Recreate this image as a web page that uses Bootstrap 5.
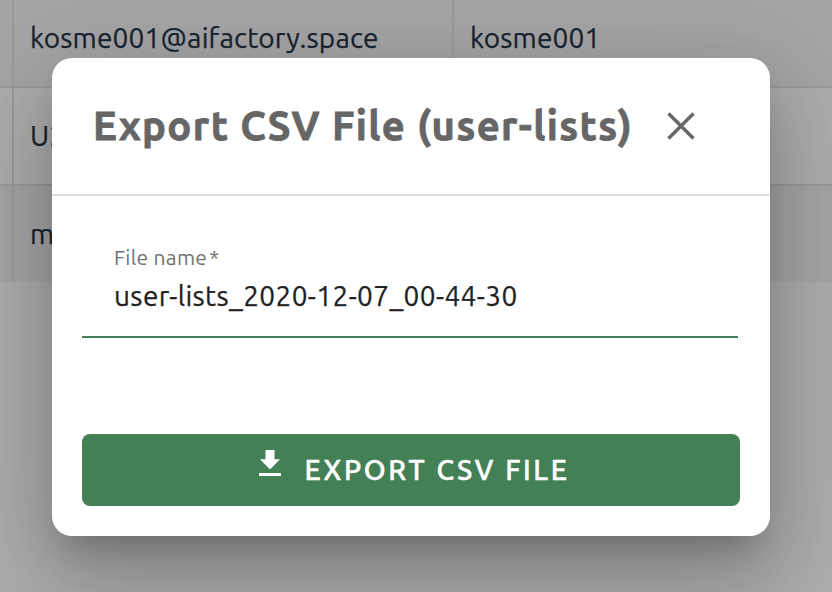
<!DOCTYPE html>
<html lang="en">
<head>
<meta charset="utf-8">
<meta name="viewport" content="width=device-width, initial-scale=1">
<title>Export CSV File</title>
<link href="https://cdn.jsdelivr.net/npm/bootstrap@5.3.0/dist/css/bootstrap.min.css" rel="stylesheet">
<style>
  body { font-family: Ubuntu, "Noto Sans", sans-serif; background: #fff; height: 592px; }
  .user-grid { display: grid; grid-template-columns: 14px 440px 1fr; color: #263548; font-size: 28px; line-height: 40px; letter-spacing: .17px; -webkit-text-stroke: .25px; }
  .user-grid > div { height: 98px; padding-left: 16px; border-right: 2px solid #e2e2e5; border-bottom: 2px solid #e4e4e6; display: flex; align-items: center; }
  .user-grid > div:nth-child(3n+1) { padding-left: 0; }
  .user-grid > div:nth-child(3n) { border-right: 0; }
  .user-grid > div:nth-child(-n+3) { height: 88px; align-items: flex-start; }
  .user-grid > div:nth-child(-n+3) span { margin-top: 18px; }
  .user-grid > .striped { background: #f4f4f8; }
  .user-grid > div:nth-child(n+7) { border-bottom: 0; height: 96px; }
  .scrim { background: rgba(0,0,0,.32); padding: 58px 62px 56px 52px; }
  .export-dialog { height: 478px; border: 0; border-radius: 20px; box-shadow: 0 22px 30px -14px rgba(0,0,0,.2), 0 48px 76px 6px rgba(0,0,0,.14), 0 18px 92px 16px rgba(0,0,0,.12); }
  .export-head { height: 138px; border-bottom: 2px solid #dcdcdc; padding: 0 74px 0 41px; color: #666; }
  .export-title { font-size: 40px; font-weight: 700; line-height: 1; letter-spacing: 1.4px; -webkit-text-stroke: .8px; }
  .export-body { padding: 30px; }
  .name-field { width: 656px; height: 112px; border-bottom: 2px solid #438055; padding: 18px 32px 0; }
  .name-field label { font-size: 21px; line-height: 26px; color: #717171; display: block; letter-spacing: .3px; }
  .name-field label span { margin-left: 2px; }
  .name-field input { font-size: 28px; line-height: 40px; height: 40px; color: #212121; letter-spacing: .38px; margin-top: 6px; -webkit-text-stroke: .25px; }
  .export-btn, .export-btn:hover { height: 72px; width: 658px; border: 0; border-radius: 8px; background: #438055; color: #fff; font-size: 28px; font-weight: 500; letter-spacing: 2.65px; line-height: 1; -webkit-text-stroke: .5px; }
  .export-btn svg { margin: 0 -1px 14px 7px; }
</style>
<script src="https://cdn.jsdelivr.net/npm/bootstrap@5.3.0/dist/js/bootstrap.bundle.min.js"></script>
</head>
<body class="position-relative overflow-hidden">
  <div class="user-grid">
    <div class="striped"></div><div class="striped"><span>kosme001@aifactory.space</span></div><div class="striped"><span>kosme001</span></div>
    <div></div><div><span>U2</span></div><div></div>
    <div class="striped"></div><div class="striped"><span>m</span></div><div class="striped"></div>
  </div>
  <div class="scrim position-absolute top-0 start-0 w-100 h-100">
    <div class="export-dialog bg-white d-flex flex-column" role="dialog" aria-modal="true">
      <div class="export-head d-flex align-items-center justify-content-between">
        <h1 class="export-title m-0 text-nowrap">Export CSV File (user-lists)</h1>
        <button class="btn p-0 border-0 d-flex" aria-label="Close" type="button">
          <svg width="30" height="30" viewBox="0 0 30 30" fill="none" stroke="#666" stroke-width="3.4"><path d="M2.5 2.500 27.500 27.500M27.500 2.500 2.500 27.500"/></svg>
        </button>
      </div>
      <div class="export-body d-flex flex-column justify-content-between flex-grow-1">
        <div class="name-field">
          <label for="fname">File name<span>*</span></label>
          <input id="fname" class="form-control p-0 border-0 rounded-0 shadow-none bg-transparent" value="user-lists_2020-12-07_00-44-30">
        </div>
        <button class="export-btn btn p-0 d-flex align-items-center justify-content-center" type="button">
          <svg width="22" height="26" viewBox="0 0 22 26" fill="#fff"><path d="M6.500 0h9v9.200H21L11 19.500 1 9.200h5.500zM0 23h22v3H0z"/></svg>
          <span class="ps-4">EXPORT CSV FILE</span>
        </button>
      </div>
    </div>
  </div>
</body>
</html>
